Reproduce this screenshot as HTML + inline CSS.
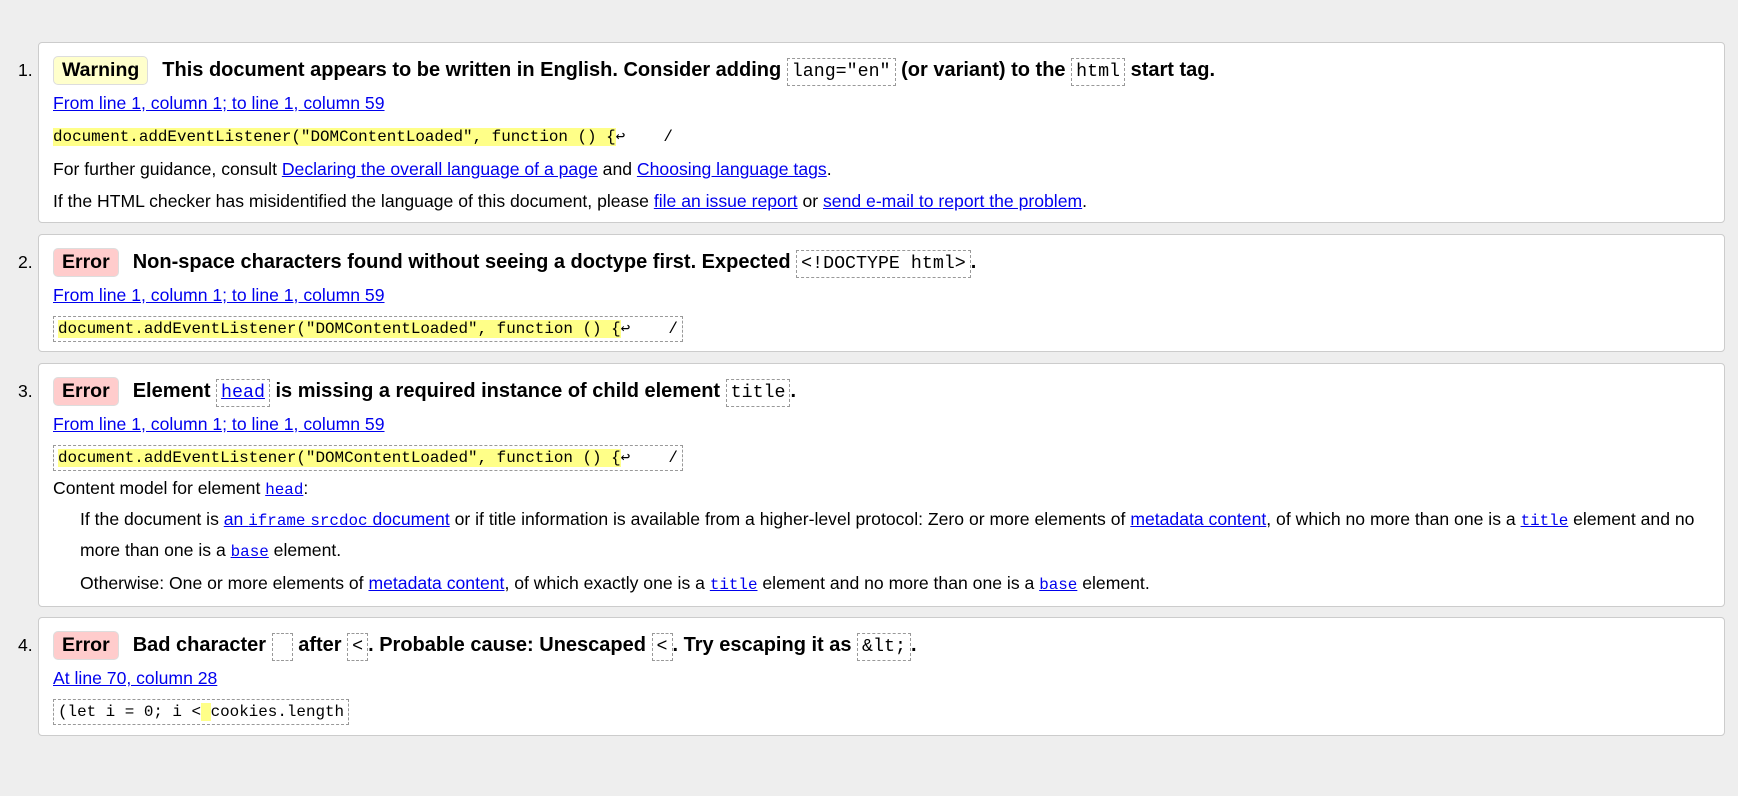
<!DOCTYPE html>
<html><head><style>
body{margin:0;background:#eee;width:1738px;height:796px;overflow:hidden;font-family:"Liberation Sans",Arial,sans-serif;font-size:17.6px;color:#000}
.card{position:absolute;left:38px;width:1687px;background:#fff;border:1px solid #ccc;border-radius:4px;box-sizing:border-box;padding:12px 14px 0 14px}
.num{position:absolute;left:-21px;top:12px;line-height:30px}
.h{font-weight:bold;line-height:30px;white-space:nowrap;font-size:20px}
.l{line-height:32px;white-space:nowrap}
a{color:#00e;text-decoration:underline}
.badge{display:inline-block;line-height:27px;padding:0 8px;border:1px solid #ddd;border-radius:5px;margin-right:14px;font-size:19.5px}
.w{background:#ffc}
.e{background:#fcc}
code,.m{font-family:"Liberation Mono",monospace;font-size:15.9px;font-weight:normal}
.h .m{font-size:18.3px}
.box{border:1px dashed #999;padding:3px 4px}
.hl{background:#ff8}
.cb{display:inline-block;border:1px dashed #999;line-height:24px;padding:0 4px}
.ind{padding-left:27px;line-height:31px}
.ind .m{line-height:1}
</style></head><body>

<div class="card" style="top:42px;height:181px">
<div class="num">1.</div>
<div class="h"><span class="badge w">Warning</span>This document appears to be written in English. Consider adding <span class="box m">lang="en"</span> (or variant) to the <span class="box m">html</span> start tag.</div>
<div class="l"><a>From line 1, column 1; to line 1, column 59</a></div>
<div class="l"><span class="m hl">document.addEventListener("DOMContentLoaded", function () {</span><span class="m">↩&nbsp;&nbsp;&nbsp;&nbsp;/</span></div>
<div class="l">For further guidance, consult <a>Declaring the overall language of a page</a> and <a>Choosing language tags</a>.</div>
<div class="l">If the HTML checker has misidentified the language of this document, please <a>file an issue report</a> or <a>send e-mail to report the problem</a>.</div>
</div>

<div class="card" style="top:234px;height:118px">
<div class="num">2.</div>
<div class="h"><span class="badge e">Error</span>Non-space characters found without seeing a doctype first. Expected <span class="box m">&lt;!DOCTYPE html&gt;</span>.</div>
<div class="l"><a>From line 1, column 1; to line 1, column 59</a></div>
<div class="l"><span class="cb m"><span class="hl">document.addEventListener("DOMContentLoaded", function () {</span>↩&nbsp;&nbsp;&nbsp;&nbsp;/</span></div>
</div>

<div class="card" style="top:363px;height:244px">
<div class="num">3.</div>
<div class="h"><span class="badge e">Error</span>Element <span class="box m"><a>head</a></span> is missing a required instance of child element <span class="box m">title</span>.</div>
<div class="l"><a>From line 1, column 1; to line 1, column 59</a></div>
<div class="l"><span class="cb m"><span class="hl">document.addEventListener("DOMContentLoaded", function () {</span>↩&nbsp;&nbsp;&nbsp;&nbsp;/</span></div>
<div class="l">Content model for element <a class="m">head</a>:</div>
<div class="ind" style="margin-top:-2px">If the document is <a>an <span class="m">iframe</span> <span class="m">srcdoc</span> document</a> or if title information is available from a higher-level protocol: Zero or more elements of <a>metadata content</a>, of which no more than one is a <a class="m">title</a> element and no more than one is a <a class="m">base</a> element.</div>
<div class="ind" style="margin-top:2px">Otherwise: One or more elements of <a>metadata content</a>, of which exactly one is a <a class="m">title</a> element and no more than one is a <a class="m">base</a> element.</div>
</div>

<div class="card" style="top:617px;height:119px">
<div class="num">4.</div>
<div class="h"><span class="badge e">Error</span>Bad character <span class="box m">&nbsp;</span> after <span class="box m">&lt;</span>. Probable cause: Unescaped <span class="box m">&lt;</span>. Try escaping it as <span class="box m">&amp;lt;</span>.</div>
<div class="l"><a>At line 70, column 28</a></div>
<div class="l"><span class="cb m">(let i = 0; i &lt;<span class="hl">&nbsp;</span>cookies.length</span></div>
</div>

</body></html>
